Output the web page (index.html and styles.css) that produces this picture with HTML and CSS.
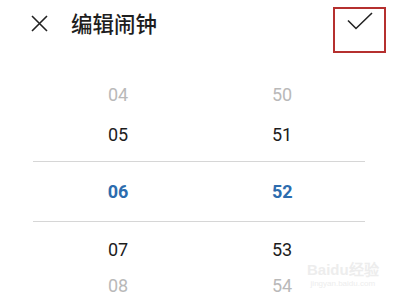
FILE: index.html
```html
<!DOCTYPE html>
<html lang="zh-CN">
<head>
<meta charset="utf-8">
<link rel="stylesheet" href="styles.css">
</head>
<body>
<div class="screen">
  <header class="header">
    <div class="left">
      <svg class="icon-close" width="17" height="17" viewBox="0 0 17 17"><path d="M1 1L16 16M16 1L1 16" stroke="#222" stroke-width="1.6" fill="none"/></svg>
      <span class="title">编辑闹钟</span>
    </div>
    <svg class="icon-check" width="26" height="18" viewBox="0 0 26 18"><path d="M1 8.5L9 16.5L25 1" stroke="#222" stroke-width="1.6" fill="none"/></svg>
  </header>
  <div class="mark"></div>
  <div class="picker">
    <div class="row far r1"><span>04</span><span>50</span></div>
    <div class="row near r2"><span>05</span><span>51</span></div>
    <div class="row selected"><span>06</span><span>52</span></div>
    <div class="row near r4"><span>07</span><span>53</span></div>
    <div class="row far r5"><span>08</span><span>54</span></div>
  </div>
  <div class="watermark"><span class="wm1">Baidu经验</span><span class="wm2">jingyan.baidu.com</span></div>
</div>
</body>
</html>
```

FILE: styles.css
```css
html, body {
  margin: 0;
  padding: 0;
  background: #fff;
}
.screen {
  position: relative;
  width: 400px;
  height: 300px;
  overflow: hidden;
  font-family: Roboto, "Noto Sans CJK SC", sans-serif;
}
.header {
  height: 46px;
  display: flex;
  align-items: center;
  justify-content: space-between;
  padding: 0 27px 0 31px;
}
.left {
  display: flex;
  align-items: center;
  gap: 23px;
}
.icon-close {
  display: block;
  margin-top: 1px;
}
.title {
  font-family: "Noto Sans CJK SC", sans-serif;
  font-size: 21.5px;
  font-weight: 500;
  color: #1e1e1e;
  line-height: 26px;
}
.icon-check {
  display: block;
  margin-bottom: 5px;
}
.mark {
  position: absolute;
  left: 333px;
  top: 7px;
  width: 49px;
  height: 42px;
  border: 2px solid #b5302f;
}
.picker {
  margin: 0 35px 0 33px;
  padding-top: 29px;
}
.row {
  display: grid;
  grid-template-columns: 170px 1fr;
  font-size: 18px;
}
.row span {
  justify-self: center;
}
.row span:last-child {
  justify-self: start;
  padding-left: 69px;
}
.far { color: #b9b9b9; }
.near { color: #1c1c1c; }
.r1 { height: 40px; line-height: 40px; }
.r2 { height: 40px; line-height: 40px; margin-bottom: 6px; }
.selected {
  height: 59px;
  line-height: 59px;
  border-top: 1px solid #d6d6d6;
  border-bottom: 1px solid #d6d6d6;
  color: #2c6cae;
  font-weight: 700;
}
.r4 { height: 56px; line-height: 56px; }
.r5 { height: 16px; line-height: 16px; }
.watermark {
  position: absolute;
  left: 307px;
  top: 262px;
  display: flex;
  flex-direction: column;
  align-items: center;
  color: #ededed;
  font-family: "Liberation Sans", sans-serif;
  line-height: 1;
}
.wm1 { font-size: 15px; font-weight: 700; }
.wm2 { font-size: 8px; margin-top: 3px; }
```
